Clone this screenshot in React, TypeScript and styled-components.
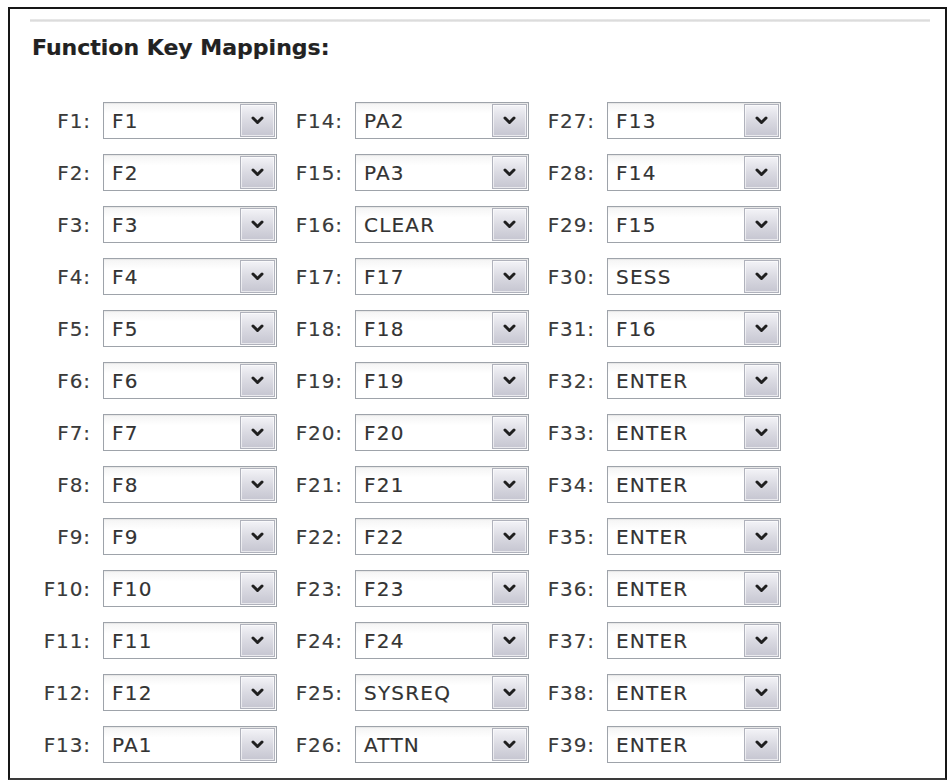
import React from "react";
import styled, { createGlobalStyle } from "styled-components";

const GlobalStyle = createGlobalStyle`
  html, body {
    margin: 0;
    padding: 0;
    background: #ffffff;
  }
  body {
    font-family: "DejaVu Sans", Verdana, sans-serif;
  }
`;

const Frame = styled.div`
  box-sizing: border-box;
  margin: 7px 0 0 8px;
  width: 939px;
  height: 773px;
  border: 2px solid #161616;
  border-bottom-color: #3a3a3a;
  background: #ffffff;
  display: flex;
  flex-direction: column;
`;

const Rule = styled.div`
  margin: 10px 15px 0 20px;
  height: 3px;
  background: linear-gradient(#ececec, #dcdcdc 50%, #ececec);
`;

const Title = styled.h2`
  margin: 13px 0 0 22px;
  font-family: "DejaVu Sans", Verdana, sans-serif;
  font-weight: bold;
  font-size: 22px;
  line-height: 26px;
  color: #222222;
  -webkit-text-stroke: 0.2px #222222;
`;

const Grid = styled.div`
  margin: 41px 0 0 29px;
  display: grid;
  grid-auto-flow: column;
  grid-template-rows: repeat(13, 37px);
  grid-template-columns: repeat(3, 238px);
  column-gap: 14px;
  row-gap: 15px;
`;

const Field = styled.div`
  display: flex;
  align-items: center;
`;

const Label = styled.span`
  width: 52px;
  margin-right: 12px;
  text-align: right;
  font-size: 20px;
  letter-spacing: 0.9px;
  color: #3a3a3a;
  -webkit-text-stroke: 0.15px #3a3a3a;
  white-space: nowrap;
`;

const SelectBox = styled.div`
  box-sizing: border-box;
  width: 174px;
  height: 37px;
  display: flex;
  align-items: stretch;
  border: 1px solid #9ea3aa;
  background: linear-gradient(#f4f4f4, #ffffff 30%);
  box-shadow: inset 0 1px 1px rgba(0, 0, 0, 0.06);
`;

const Value = styled.span`
  flex: 1;
  padding-left: 8px;
  display: flex;
  align-items: center;
  font-size: 20px;
  letter-spacing: 1.2px;
  color: #333333;
  -webkit-text-stroke: 0.15px #333333;
  white-space: nowrap;
  overflow: hidden;
`;

const Arrow = styled.span`
  box-sizing: border-box;
  width: 35px;
  margin: 1px 1px 1px 0;
  display: flex;
  align-items: center;
  justify-content: center;
  border: 1px solid #b0b2bc;
  background: linear-gradient(#f3f3f7, #dadae2 50%, #c6c6d1);
  box-shadow: inset 0 0 0 1px rgba(255, 255, 255, 0.6);
`;

const Chevron = () => (
  <svg width="13" height="9" viewBox="0 0 13 9" aria-hidden="true">
    <polyline
      points="2,2 6.5,6.5 11,2"
      fill="none"
      stroke="#1f1f1f"
      strokeWidth="3"
      strokeLinecap="round"
      strokeLinejoin="round"
    />
  </svg>
);

const values: string[] = [
  "F1", "F2", "F3", "F4", "F5", "F6", "F7", "F8", "F9", "F10", "F11", "F12", "PA1",
  "PA2", "PA3", "CLEAR", "F17", "F18", "F19", "F20", "F21", "F22", "F23", "F24", "SYSREQ", "ATTN",
  "F13", "F14", "F15", "SESS", "F16", "ENTER", "ENTER", "ENTER", "ENTER", "ENTER", "ENTER", "ENTER", "ENTER",
];

export default function App() {
  return (
    <>
      <GlobalStyle />
      <Frame>
        <Rule />
        <Title>Function Key Mappings:</Title>
        <Grid>
          {values.map((v, i) => (
            <Field key={i}>
              <Label>F{i + 1}:</Label>
              <SelectBox>
                <Value>{v}</Value>
                <Arrow>
                  <Chevron />
                </Arrow>
              </SelectBox>
            </Field>
          ))}
        </Grid>
      </Frame>
    </>
  );
}
